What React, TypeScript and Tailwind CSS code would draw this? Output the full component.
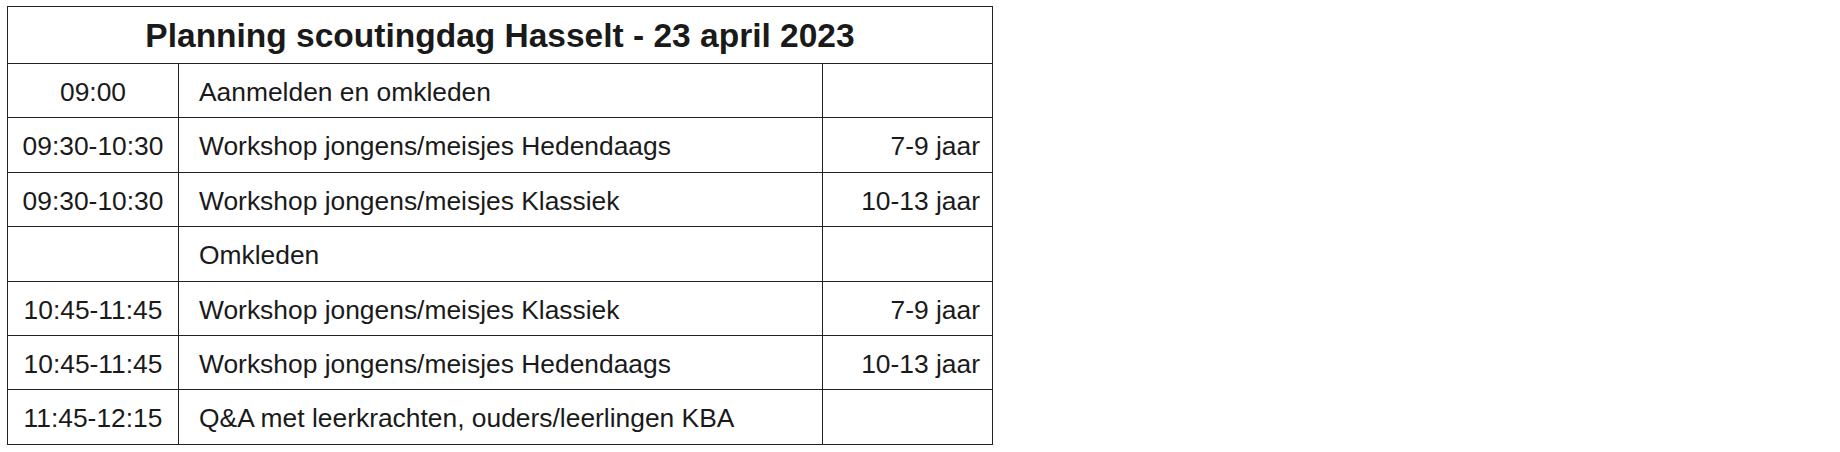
const rows: { time: string; activity: string; age: string }[] = [
  { time: '09:00', activity: 'Aanmelden en omkleden', age: '' },
  { time: '09:30-10:30', activity: 'Workshop jongens/meisjes Hedendaags', age: '7-9 jaar' },
  { time: '09:30-10:30', activity: 'Workshop jongens/meisjes Klassiek', age: '10-13 jaar' },
  { time: '', activity: 'Omkleden', age: '' },
  { time: '10:45-11:45', activity: 'Workshop jongens/meisjes Klassiek', age: '7-9 jaar' },
  { time: '10:45-11:45', activity: 'Workshop jongens/meisjes Hedendaags', age: '10-13 jaar' },
  { time: '11:45-12:15', activity: 'Q&A met leerkrachten, ouders/leerlingen KBA', age: '' },
];

export default function App() {
  return (
    <div className="w-[1840px] h-[452px] bg-white pt-[6px] pl-[7px] font-['Liberation_Sans',Arial,sans-serif] text-[#1a1a1a]">
      <table className="table-fixed border-collapse w-[985px]">
        <colgroup>
          <col className="w-[171px]" />
          <col className="w-[644px]" />
          <col className="w-[170px]" />
        </colgroup>
        <thead>
          <tr className="h-[57px]">
            <th colSpan={3} className="border border-[#222] text-center font-bold text-[33.5px] leading-none pt-[2px]">
              Planning scoutingdag Hasselt - 23 april 2023
            </th>
          </tr>
        </thead>
        <tbody>
          {rows.map((row, i) => (
            <tr key={i} className="h-[54.4px] text-[26.4px] leading-none">
              <td className="border border-[#222] text-center pt-[3px]">{row.time}</td>
              <td className="border border-[#222] pl-[20px] pt-[3px]">{row.activity}</td>
              <td className="border border-[#222] text-right pr-[12px] pt-[3px]">{row.age}</td>
            </tr>
          ))}
        </tbody>
      </table>
    </div>
  );
}
